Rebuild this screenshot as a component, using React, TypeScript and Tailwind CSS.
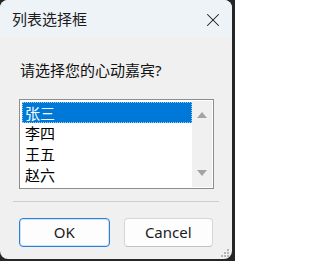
import { X } from "lucide-react";

const items = ["张三", "李四", "王五", "赵六"];

function ScrollArrow({ down }: { down?: boolean }) {
  return (
    <svg width="10" height="6" viewBox="0 0 10 6" className="block">
      <polygon points={down ? "0,0 10,0 5,6" : "0,6 10,6 5,0"} fill="#a3a3a3" />
    </svg>
  );
}

export default function App() {
  return (
    <div
      className="w-[235px] h-[261px] bg-[#262626] overflow-hidden"
      style={{ fontFamily: '"Noto Sans", "Noto Sans CJK SC", sans-serif' }}
    >
      <div className="relative w-[232px] h-[259px] rounded-[8px] overflow-hidden bg-[#f0f0f0] flex flex-col">
        {/* title bar */}
        <div className="h-[37px] bg-[#eef3f8] flex items-center justify-between pl-[12px] pr-[8px] pt-[2px]">
          <span className="text-[15px] leading-none text-[#1b1b1b]">列表选择框</span>
          <X size={22} strokeWidth={1.15} className="text-[#1b1b1b]" />
        </div>

        {/* body */}
        <div className="flex flex-col px-[19px] pt-[23px]">
          <div className="h-[20px] leading-[20px] text-[15px] text-[#111] pl-[1px]">请选择您的心动嘉宾?</div>
          <div className="mt-[19px] w-[195px] h-[90px] border border-[#8d8d8d] bg-white flex p-[2px]">
            <div className="flex-1 flex flex-col">
              {items.map((name, i) => (
                <div
                  key={name}
                  className={
                    i === 0
                      ? "h-[21px] leading-[20px] text-[15px] pl-[2px] bg-[#0078d7] text-white border border-dotted border-[#9ccaf0]"
                      : "h-[21px] leading-[21px] text-[15px] pl-[3px] text-black"
                  }
                >
                  {name}
                </div>
              ))}
            </div>
            <div className="w-[20px] -my-[1px] -mr-[1px] bg-[#f0f0f0] flex flex-col items-center justify-between py-[11px]">
              <ScrollArrow />
              <ScrollArrow down />
            </div>
          </div>
        </div>

        <div className="mt-[12px] mx-[13px] h-[1px] bg-[#cdcdcd]" />

        <div className="flex gap-[14px] px-[19px] mt-[16px]">
          <button className="w-[91px] h-[29px] rounded-[4px] bg-[#fdfdfd] border border-[#2b7fd6] shadow-[inset_0_0_0_1px_#cfe3f7] text-[15px] text-[#1b1b1b]">
            OK
          </button>
          <button className="w-[90px] h-[29px] rounded-[4px] bg-[#fdfdfd] border border-[#d6d6d6] border-b-[#c2c2c2] text-[15px] text-[#1b1b1b]">
            Cancel
          </button>
        </div>

        {/* resize grip */}
        <div className="absolute right-[3px] bottom-[2px] grid grid-cols-3 gap-[1px]">
          <span className="w-[2px] h-[2px]" />
          <span className="w-[2px] h-[2px]" />
          <span className="w-[2px] h-[2px] bg-[#b5b5b5]" />
          <span className="w-[2px] h-[2px]" />
          <span className="w-[2px] h-[2px] bg-[#b5b5b5]" />
          <span className="w-[2px] h-[2px] bg-[#b5b5b5]" />
          <span className="w-[2px] h-[2px] bg-[#b5b5b5]" />
          <span className="w-[2px] h-[2px] bg-[#b5b5b5]" />
          <span className="w-[2px] h-[2px] bg-[#b5b5b5]" />
        </div>
      </div>
    </div>
  );
}
